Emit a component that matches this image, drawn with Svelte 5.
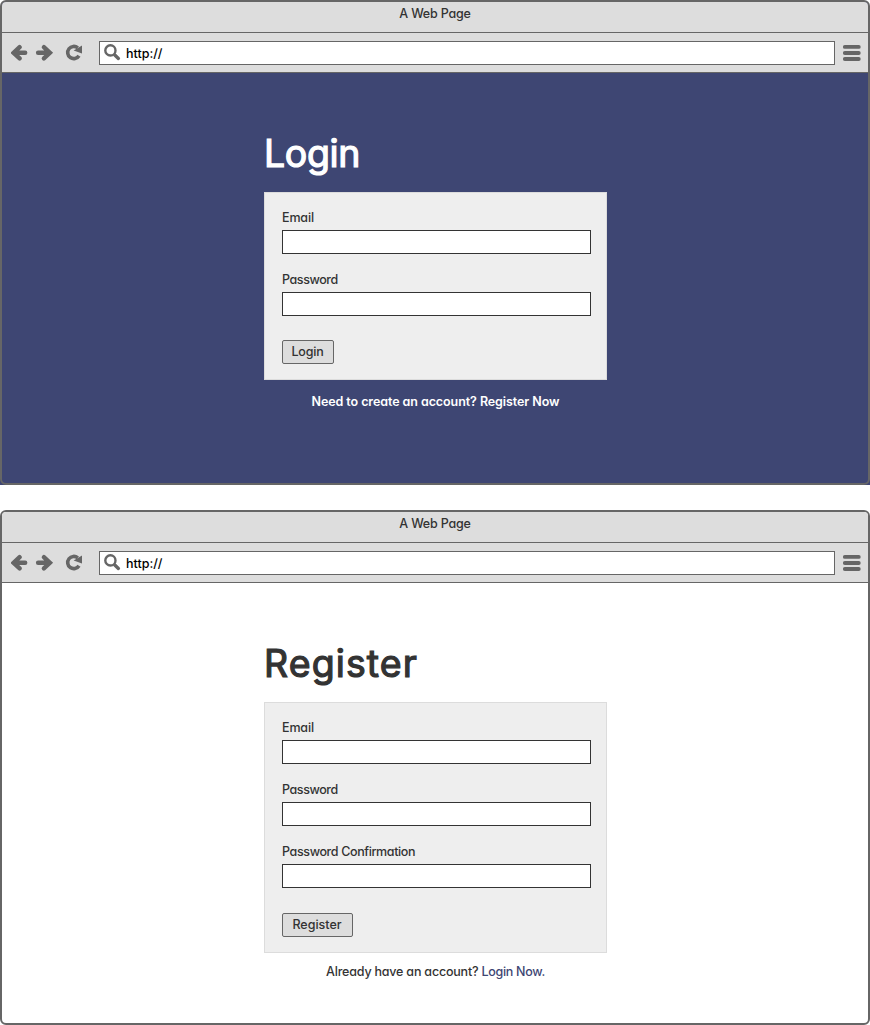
<script>
  const pages = [
    {
      kind: 'login',
      title: 'Login',
      fields: ['Email', 'Password'],
      action: 'Login',
      prompt: 'Need to create an account?',
      link: 'Register Now'
    },
    {
      kind: 'register',
      title: 'Register',
      fields: ['Email', 'Password', 'Password Confirmation'],
      action: 'Register',
      prompt: 'Already have an account?',
      link: 'Login Now.'
    }
  ];
</script>

<main>
  {#each pages as page}
    <section class="shell {page.kind}">
      <div class="window">
        <header class="titlebar">A Web Page</header>
        <nav class="toolbar">
          <svg class="nav-icons" width="76" height="20" viewBox="0 0 76 20" fill="none" stroke="#666">
            <path d="M8.6 4.2 2.6 9.8l6 5.6M3.6 9.8h10.6" stroke-width="4.4" stroke-linecap="round" />
            <path d="m32.9 4.2 6 5.6-6 5.6M37.9 9.8H27.1" stroke-width="4.4" stroke-linecap="round" />
            <path d="M66.8 4.9A6.1 6.1 0 1 0 68 12.7" stroke-width="3.6" />
            <path d="M71 2.4v8.2l-8.4-3z" fill="#666" stroke="none" />
          </svg>
          <div class="address">
            <svg width="18" height="18" viewBox="0 0 18 18" fill="none" stroke="#666">
              <circle cx="6.4" cy="6.4" r="5.1" stroke-width="2.4" />
              <path d="m10.8 11 3.6 3.4" stroke-width="3.4" stroke-linecap="round" />
            </svg>
            <span>http://</span>
          </div>
          <svg class="menu" width="20" height="20" viewBox="0 0 20 20" stroke="#666" stroke-width="3.8" stroke-linecap="round">
            <path d="M2.8 3.9h14M2.8 10h14M2.8 16h14" />
          </svg>
        </nav>
        <div class="content">
          <h1>{page.title}</h1>
          <form class="panel">
            {#each page.fields as field}
              <label><span class:short={field.length < 6}>{field}</span><input type="text" /></label>
            {/each}
            <button type="button">{page.action}</button>
          </form>
          <p><span>{page.prompt}</span> <span class="link">{page.link}</span></p>
        </div>
      </div>
    </section>
  {/each}
</main>

<style>
  :global(body) { background: #fff; }
  main {
    display: flex;
    flex-direction: column;
    gap: 25px;
    width: 870px;
    font: 500 12.5px/16px Inter, "Open Sans", sans-serif;
    font-feature-settings: "cv11", "ss03";
    color: #333;
  }
  .shell { height: 485px; background: linear-gradient(#fff 50%, #3e4673 50%); }
  .shell.register { height: 515px; background: #fff; }
  .window {
    box-sizing: border-box;
    height: 100%;
    border: 2px solid #666;
    border-radius: 6px;
    overflow: hidden;
    background: #fff;
  }
  .login .window { background: #3e4673; }
  .titlebar {
    box-sizing: border-box;
    height: 31px;
    padding-top: 4px;
    border-bottom: 1px solid #666;
    background: #ddd;
    text-align: center;
    letter-spacing: -0.2px;
  }
  .toolbar {
    box-sizing: border-box;
    display: flex;
    align-items: center;
    height: 40px;
    padding: 0 6px 0 9px;
    border-bottom: 1px solid #666;
    background: #ddd;
  }
  .nav-icons { margin-right: 12px; }
  .address {
    box-sizing: border-box;
    display: flex;
    align-items: center;
    gap: 4px;
    flex: 1;
    height: 24px;
    padding-left: 4px;
    border: 1px solid #666;
    background: #fff;
    color: #000;
  }
  .address span { padding-top: 2px; }
  .menu { margin-left: 7px; }
  .content {
    width: 343px;
    margin-left: 262px;
    padding-top: 56px;
  }
  h1 {
    height: 63px;
    margin: 0;
    font-size: 37.5px;
    line-height: 50px;
    font-weight: 400;
    letter-spacing: -0.4px;
    -webkit-text-stroke: 1.2px currentColor;
    stroke-linejoin: round;
  }
  .register h1 { letter-spacing: 1.1px; }
  .login h1, .login p { color: #fff; }
  .panel {
    box-sizing: border-box;
    height: 188px;
    padding: 17px 15px 0 17px;
    border: 1px solid #dcdcdc;
    background: #eee;
  }
  .register .panel { height: 251px; }
  label { display: block; height: 62px; }
  label span { display: block; height: 20px; letter-spacing: -0.42px; }
  label .short { letter-spacing: -0.15px; }
  label:nth-of-type(3) span { letter-spacing: -0.37px; }
  input {
    box-sizing: border-box;
    display: block;
    width: 309px;
    height: 24px;
    border: 1px solid #333;
    background: #fff;
  }
  button {
    box-sizing: border-box;
    display: block;
    width: 52px;
    height: 24px;
    margin-top: 6px;
    padding: 0 1px 0 0;
    border: 1px solid #666;
    border-radius: 2px;
    background: #ddd;
    color: #333;
    font: inherit;
    font-feature-settings: inherit;
    line-height: 20px;
  }
  .login button { letter-spacing: -0.2px; }
  .register button { width: 71px; margin-top: 7px; }
  button { padding-bottom: 1px; }
  p { margin: 14px 0 0; text-align: center; white-space: nowrap; }
  .login p { font-weight: 600; letter-spacing: -0.08px; }
  .register p { margin-top: 11px; letter-spacing: -0.2px; }
  .register .link { letter-spacing: -0.3px; color: #3e4673; }
</style>
